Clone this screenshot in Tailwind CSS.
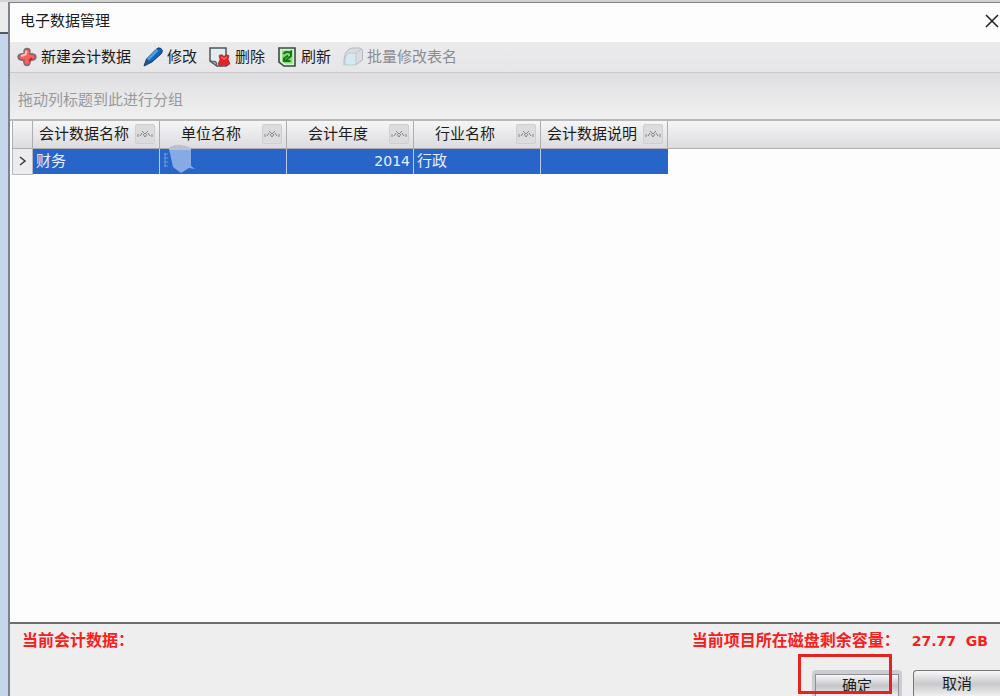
<!DOCTYPE html>
<html lang="zh-CN">

<head>
  <meta charset="UTF-8">
  <meta name="viewport" content="width=device-width, initial-scale=1.0">
  <title>电子数据管理</title>
  <script src="https://cdn.jsdelivr.net/npm/@tailwindcss/browser@4"></script>
</head>

<body class="overflow-hidden font-['Liberation_Sans','Noto_Sans_CJK_SC',sans-serif] text-[15px] leading-5 text-[#1c1c1c]">
  <div class="flex h-screen border-t-2 border-[#d6d3cf] bg-[#c3d6ec]">

    <!-- window behind the dialog -->
    <div class="w-2 shrink-0">
      <div class="h-8 border-b-2 border-[#55585e] bg-[#ebebeb]"></div>
    </div>

    <div class="flex min-w-0 flex-1 flex-col border-t border-l-2 border-[#7d838c] bg-[#fdfdfd]">
      <div class="flex h-[39px] shrink-0 items-center justify-between pb-1 pl-[10px]">
        <h1>电子数据管理</h1>
        <button aria-label="关闭" class="h-4 w-4">
          <svg class="h-4 w-4" viewBox="0 0 16 16" fill="none" stroke="#1c1c1c" stroke-width="1.5">
            <path d="M2 2l12 12M14 2L2 14" />
          </svg>
        </button>
      </div>

      <div class="flex h-[31px] shrink-0 items-center gap-3 border-b border-[#c9c9cb] bg-linear-to-b from-[#ebebed] to-[#e6e6e8] pl-[7px]">
        <button class="flex items-center gap-1">
          <svg class="h-5 w-5" viewBox="0 0 20 20">
            <path d="M7 4Q7 1.500 10 1.500T13 4V6.500L16 7Q19 7.500 19 10T16 13L13.500 13.500 13 16Q12.500 18.500 10 18.500T7 16L6.500 13.500 4 13Q1 12.500 1 10T4 7L7 6.500z" fill="#e9494a" stroke="#74717c" stroke-width="1.3" stroke-linejoin="round" />
            <path d="M10 5v10M5 10h10" stroke="#f2655f" stroke-width="4" stroke-linecap="round" />
            <path d="M9.500 3.500L8.500 7.500 4 9" stroke="#ffc6b8" stroke-width="2" fill="none" />
            <path d="M12 14l3-3" stroke="#ce2733" stroke-width="2" />
          </svg>
          <span>新建会计数据</span>
        </button>
        <button class="flex items-center gap-1">
          <svg class="h-5 w-5" viewBox="0 0 20 20">
            <path d="M1 19L3.500 12 13 2.500Q15-.2 18 1.500 20.500 3.500 18.500 6.500L9 15z" fill="#1465b6" stroke="#123d74" />
            <path d="M5 12.500L14.500 3" stroke="#4aa4e8" stroke-width="2.500" />
            <path d="M1 19L3.500 12.500 8.500 15z" fill="#27557f" />
          </svg>
          <span>修改</span>
        </button>
        <button class="flex items-center gap-1">
          <svg class="h-5 w-[22px]" viewBox="0 0 22 20">
            <path d="M1 1h16v18H8L1 14z" fill="#e3edee" stroke="#4d565c" stroke-width="1.5" />
            <path d="M1 14l6 .5 1 4.500z" fill="#9ba7ac" stroke="#4d565c" />
            <path d="M10 8.500l3-.8 2 1.800 2.500-1.800 2.500 1-1 3.500 2 4.500-3 2.300-3-1.500-3.500 1.500-2.500-2 2-4.500z" fill="#df2425" stroke="#9e2024" stroke-width=".7" />
            <path d="M12 10l3 2 3-2" fill="none" stroke="#ff6b5e" stroke-width="1.500" />
          </svg>
          <span>删除</span>
        </button>
        <button class="flex items-center gap-1">
          <svg class="h-5 w-5" viewBox="0 0 20 20">
            <path d="M2 1h16v18H7l-5-4z" fill="#d7f0cf" stroke="#3d4a46" stroke-width="1.600" />
            <path d="M5 3.500h10.500v13H8L5 14z" fill="#87db77" />
            <path d="M6.500 7q2-3 6-1.500L14 4.500V9l-6 5h5.500M7 15v-3.500l4-3" fill="none" stroke="#16761d" stroke-width="2" />
          </svg>
          <span>刷新</span>
        </button>
        <button class="flex items-center gap-1 text-[#8c8c8e]" disabled>
          <svg class="h-5 w-5" viewBox="0 0 20 20">
            <path d="M1 18Q0 3 9 1h8l2.500 2v10l-7 5V9z" fill="#dadddf" stroke="#b4b9bd" />
            <path d="M2 18Q1 9 6 6h7v12z" fill="#d4eaf0" stroke="#b9ccd2" />
            <path d="M13 6l5.500-4" stroke="#bfc3c6" />
          </svg>
          <span>批量修改表名</span>
        </button>
      </div>

      <div class="flex h-12 shrink-0 items-center border-b-2 border-[#b9b9bc] bg-linear-to-b from-[#dfdee0] to-[#f0f0f1] pt-2 pl-2 text-[#99999b]">
        拖动列标题到此进行分组
      </div>

      <div class="min-h-0 flex-1 pl-[2px]">
        <table class="w-full table-fixed border-collapse">
          <colgroup>
            <col class="w-[20px]">
            <col class="w-[127px]">
            <col class="w-[127px]">
            <col class="w-[127px]">
            <col class="w-[127px]">
            <col class="w-[127px]">
            <col>
          </colgroup>
          <thead>
            <tr class="h-[27px] bg-linear-to-b from-[#f6f6f7] to-[#dcdcdf]">
              <th class="border border-t-0 border-[#aeaeb1]"></th>
              <th class="border border-t-0 border-[#aeaeb1] p-0 font-normal">
                <div class="flex items-center pr-1">
                  <span class="flex-1 whitespace-nowrap text-center">会计数据名称</span>
                  <button aria-label="筛选" class="flex h-5 w-5 items-center justify-center rounded-xs border border-[#cfcfd2] bg-[#dcdcde]">
                    <svg class="h-2 w-4" viewBox="0 0 16 8" fill="none" stroke="#85858a"><path d="M1 4v3M3 6l2-3M5 1l3 3 3-3M6 4l2 3 2-3M11 3l2 3M15 4v3" /></svg>
                  </button>
                </div>
              </th>
              <th class="border border-t-0 border-[#aeaeb1] p-0 font-normal">
                <div class="flex items-center pr-1">
                  <span class="flex-1 whitespace-nowrap text-center">单位名称</span>
                  <button aria-label="筛选" class="flex h-5 w-5 items-center justify-center rounded-xs border border-[#cfcfd2] bg-[#dcdcde]">
                    <svg class="h-2 w-4" viewBox="0 0 16 8" fill="none" stroke="#85858a"><path d="M1 4v3M3 6l2-3M5 1l3 3 3-3M6 4l2 3 2-3M11 3l2 3M15 4v3" /></svg>
                  </button>
                </div>
              </th>
              <th class="border border-t-0 border-[#aeaeb1] p-0 font-normal">
                <div class="flex items-center pr-1">
                  <span class="flex-1 whitespace-nowrap text-center">会计年度</span>
                  <button aria-label="筛选" class="flex h-5 w-5 items-center justify-center rounded-xs border border-[#cfcfd2] bg-[#dcdcde]">
                    <svg class="h-2 w-4" viewBox="0 0 16 8" fill="none" stroke="#85858a"><path d="M1 4v3M3 6l2-3M5 1l3 3 3-3M6 4l2 3 2-3M11 3l2 3M15 4v3" /></svg>
                  </button>
                </div>
              </th>
              <th class="border border-t-0 border-[#aeaeb1] p-0 font-normal">
                <div class="flex items-center pr-1">
                  <span class="flex-1 whitespace-nowrap text-center">行业名称</span>
                  <button aria-label="筛选" class="flex h-5 w-5 items-center justify-center rounded-xs border border-[#cfcfd2] bg-[#dcdcde]">
                    <svg class="h-2 w-4" viewBox="0 0 16 8" fill="none" stroke="#85858a"><path d="M1 4v3M3 6l2-3M5 1l3 3 3-3M6 4l2 3 2-3M11 3l2 3M15 4v3" /></svg>
                  </button>
                </div>
              </th>
              <th class="border border-t-0 border-[#aeaeb1] p-0 font-normal">
                <div class="flex items-center pr-1">
                  <span class="flex-1 whitespace-nowrap text-center">会计数据说明</span>
                  <button aria-label="筛选" class="flex h-5 w-5 items-center justify-center rounded-xs border border-[#cfcfd2] bg-[#dcdcde]">
                    <svg class="h-2 w-4" viewBox="0 0 16 8" fill="none" stroke="#85858a"><path d="M1 4v3M3 6l2-3M5 1l3 3 3-3M6 4l2 3 2-3M11 3l2 3M15 4v3" /></svg>
                  </button>
                </div>
              </th>
              <th class="border-b border-[#aeaeb1]"></th>
            </tr>
          </thead>
          <tbody>
            <tr class="h-[26px] text-[#e8effb]">
              <td class="border border-[#b9b9bc] bg-[#ececee] p-0">
                <svg class="mx-auto h-3 w-3" viewBox="0 0 12 12" fill="none" stroke="#3a3a3a" stroke-width="1.500"><path d="M3 2l5 4-5 4" /></svg>
              </td>
              <td class="border-r border-[#b8cbee] bg-[#2865c9] px-[3px] py-0">财务</td>
              <td class="relative border-r border-[#b8cbee] bg-[#2865c9] px-[3px] py-0">
                <!-- masked unit name -->
                <svg class="absolute bottom-0 left-[3px] h-[30px] w-8" viewBox="0 0 32 30">
                  <path d="M1 10h4M1 14h4M1 18h4M1 22h4M2 9v14" stroke="#6f9ae0" fill="none" />
                  <path d="M6 5h22v17l4 3-6-1-8 5-8-6z" fill="#86aae3" />
                  <path d="M7 3Q16-2 28 4v2H6z" fill="#b9c0d0" />
                </svg>
              </td>
              <td class="border-r border-[#b8cbee] bg-[#2865c9] px-[3px] py-0 text-right font-['DejaVu_Sans',sans-serif] text-sm">2014</td>
              <td class="border-r border-[#b8cbee] bg-[#2865c9] px-[3px] py-0">行政</td>
              <td class="bg-[#2865c9] px-[3px] py-0"></td>
              <td></td>
            </tr>
          </tbody>
        </table>
      </div>

      <div class="flex h-[74px] shrink-0 flex-col overflow-hidden border-t-2 border-[#6d6d70] bg-[#eeeeef]">
        <div class="flex h-[34px] shrink-0 items-center justify-between pr-3 pl-3 text-base font-bold text-[#f8201f]">
          <span>当前会计数据：</span>
          <div class="flex gap-3">
            <span>当前项目所在磁盘剩余容量：</span>
            <span class="whitespace-pre font-['DejaVu_Sans',sans-serif] text-sm leading-6">27.77  GB</span>
          </div>
        </div>
        <div class="flex shrink-0 justify-end gap-[11px] pt-3">
          <div class="relative rounded-sm bg-[#cdcdd1] px-[3px] pt-1">
            <button class="h-6 w-[84px] border border-[#8f8f93] bg-linear-to-b from-[#f7f7f7] via-[#c6c6c9] to-[#f4f4f4]">确定</button>
            <div class="pointer-events-none absolute -top-4 -left-[14px] h-10 w-[94px] border-3 border-[#e3231f]"></div>
          </div>
          <button class="h-7 w-[87px] rounded-l-sm border border-r-0 border-[#77777b] bg-linear-to-b from-[#f9f9f9] via-[#c9c9cc] to-[#f4f4f4]">取消</button>
        </div>
      </div>
    </div>
  </div>
</body>

</html>
